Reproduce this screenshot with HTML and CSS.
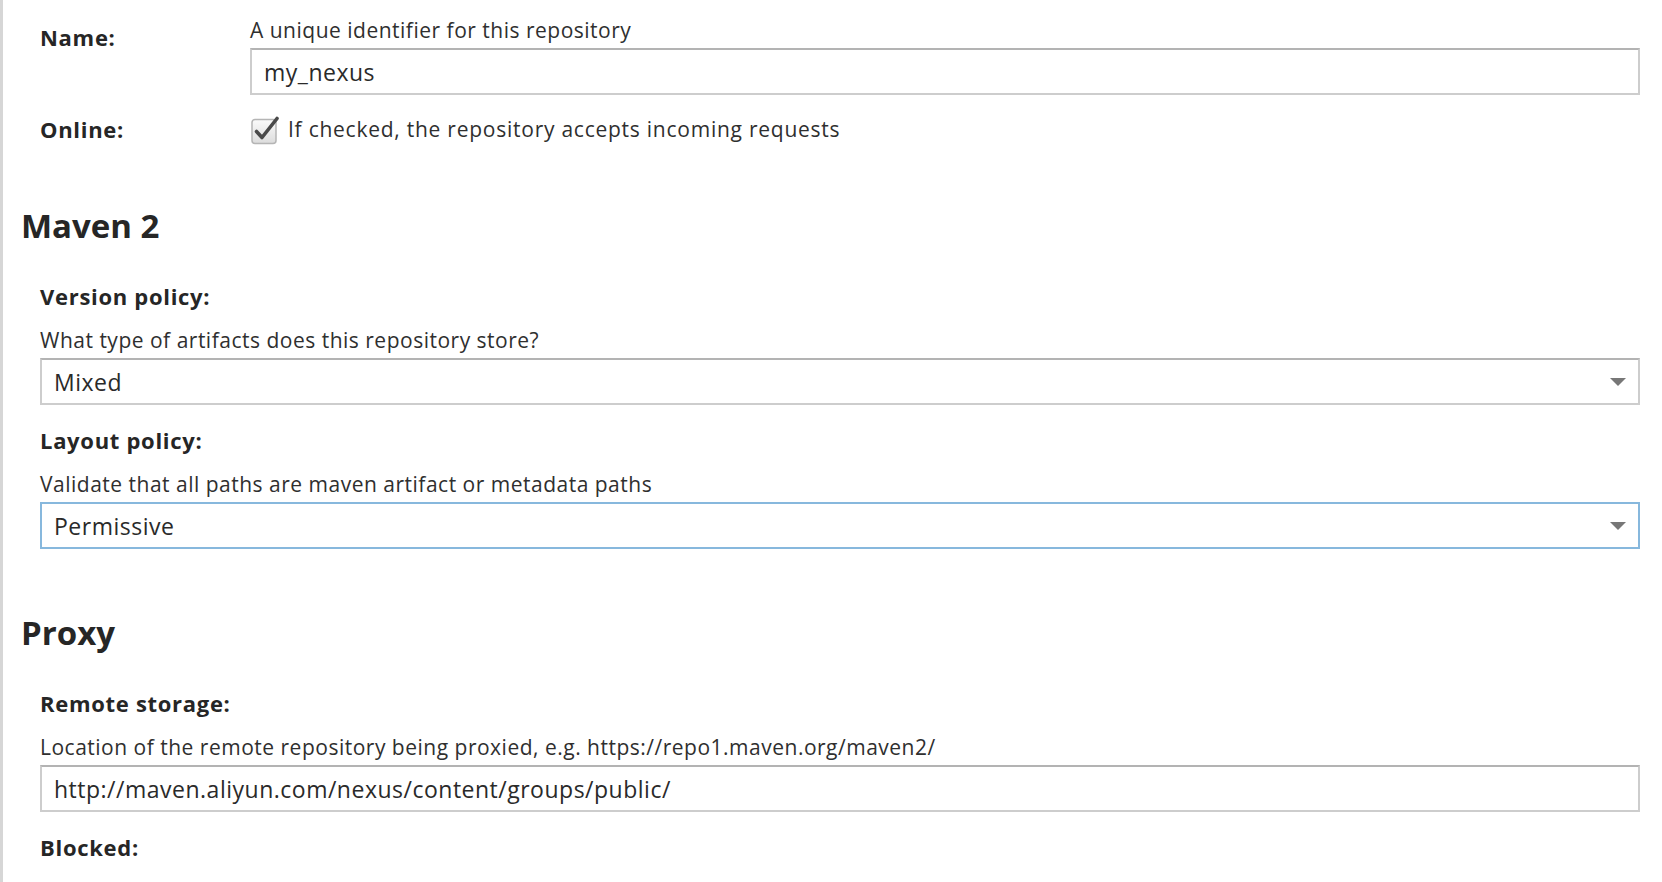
FILE: index.html
```html
<!DOCTYPE html>
<html>
<head>
<meta charset="utf-8">
<link rel="stylesheet" href="styles.css">
</head>
<body>
<div class="page">
  <div class="top-grid">
    <div class="top-label name-label">Name:</div>
    <div class="top-field">
      <div class="desc">A unique identifier for this repository</div>
      <div class="box">my_nexus</div>
    </div>
    <div class="top-label online-label">Online:</div>
    <div class="check-row">
      <svg class="checkbox" width="30" height="30" viewBox="0 0 30 30">
        <defs>
          <linearGradient id="cbg" x1="0" y1="0" x2="0" y2="1">
            <stop offset="0" stop-color="#fbfbfb"/>
            <stop offset="1" stop-color="#dcdcdc"/>
          </linearGradient>
        </defs>
        <rect x="2" y="4.5" width="24" height="24" rx="3" fill="url(#cbg)" stroke="#b5b5b5" stroke-width="1.5"/>
        <path d="M6.5 16.5 L12 22.5 L27 3.5" fill="none" stroke="#4a4a4a" stroke-width="3.6" stroke-linecap="round" stroke-linejoin="round"/>
      </svg>
      <span class="check-text">If checked, the repository accepts incoming requests</span>
    </div>
  </div>

  <h2 class="section-title maven-title">Maven 2</h2>
  <div class="fields">
    <div class="field">
      <div class="label">Version policy:</div>
      <div class="desc">What type of artifacts does this repository store?</div>
      <div class="box select">Mixed<span class="arrow"></span></div>
    </div>
    <div class="field">
      <div class="label">Layout policy:</div>
      <div class="desc">Validate that all paths are maven artifact or metadata paths</div>
      <div class="box select focused">Permissive<span class="arrow"></span></div>
    </div>
  </div>

  <h2 class="section-title proxy-title">Proxy</h2>
  <div class="fields">
    <div class="field">
      <div class="label">Remote storage:</div>
      <div class="desc">Location of the remote repository being proxied, e.g. https://repo1.maven.org/maven2/</div>
      <div class="box">http://maven.aliyun.com/nexus/content/groups/public/</div>
    </div>
    <div class="field">
      <div class="label label-only">Blocked:</div>
    </div>
  </div>
</div>
</body>
</html>
```

FILE: styles.css
```css
html, body {
  margin: 0;
  padding: 0;
  background: #ffffff;
  height: 100%;
  overflow: hidden;
}
body {
  font-family: "Open Sans", Lato, sans-serif;
  color: #2b2b2b;
}
.page {
  box-sizing: border-box;
  min-height: 882px;
  border-left: 3px solid #d6d6d6;
  padding: 18px 22px 0 18px;
}
.top-grid {
  display: grid;
  grid-template-columns: 210px 1fr;
  padding-left: 19px;
  row-gap: 22px;
}
.top-label {
  font-size: 22px;
  font-weight: 700;
  letter-spacing: 0.7px;
  line-height: 24px;
  color: #262626;
}
.name-label { padding-top: 7px; }
.desc {
  font-size: 21px;
  letter-spacing: 0.5px;
  line-height: 24px;
  color: #2f2f2f;
  margin-bottom: 6px;
}
.box {
  box-sizing: border-box;
  height: 47px;
  border: 2px solid #cdcdcd;
  border-top-color: #b3b3b3;
  padding: 0 12px;
  font-size: 23px;
  letter-spacing: 0.5px;
  line-height: 45px;
  color: #2a2a2a;
  position: relative;
  background: #fff;
}
.check-row {
  display: flex;
  align-items: center;
  height: 24px;
  gap: 8px;
}
.checkbox { margin-top: 2px; }
.check-text {
  font-size: 21px;
  letter-spacing: 0.75px;
  line-height: 24px;
  color: #2f2f2f;
}
.section-title {
  margin: 0;
  font-size: 33px;
  font-weight: 700;
  line-height: 40px;
  color: #262626;
}
.maven-title { margin-top: 65px; }
.proxy-title { margin-top: 64px; }
.fields {
  padding-left: 19px;
  margin-top: 38px;
  display: flex;
  flex-direction: column;
  gap: 23px;
}
.label {
  font-size: 22px;
  font-weight: 700;
  letter-spacing: 0.7px;
  line-height: 24px;
  color: #262626;
  margin-bottom: 20px;
}
.label-only { margin-bottom: 0; }
.focused {
  border-color: #87b8dd;
}
.arrow {
  position: absolute;
  right: 12px;
  top: 18px;
  width: 0;
  height: 0;
  border-left: 8px solid transparent;
  border-right: 8px solid transparent;
  border-top: 8px solid #777777;
}
```
